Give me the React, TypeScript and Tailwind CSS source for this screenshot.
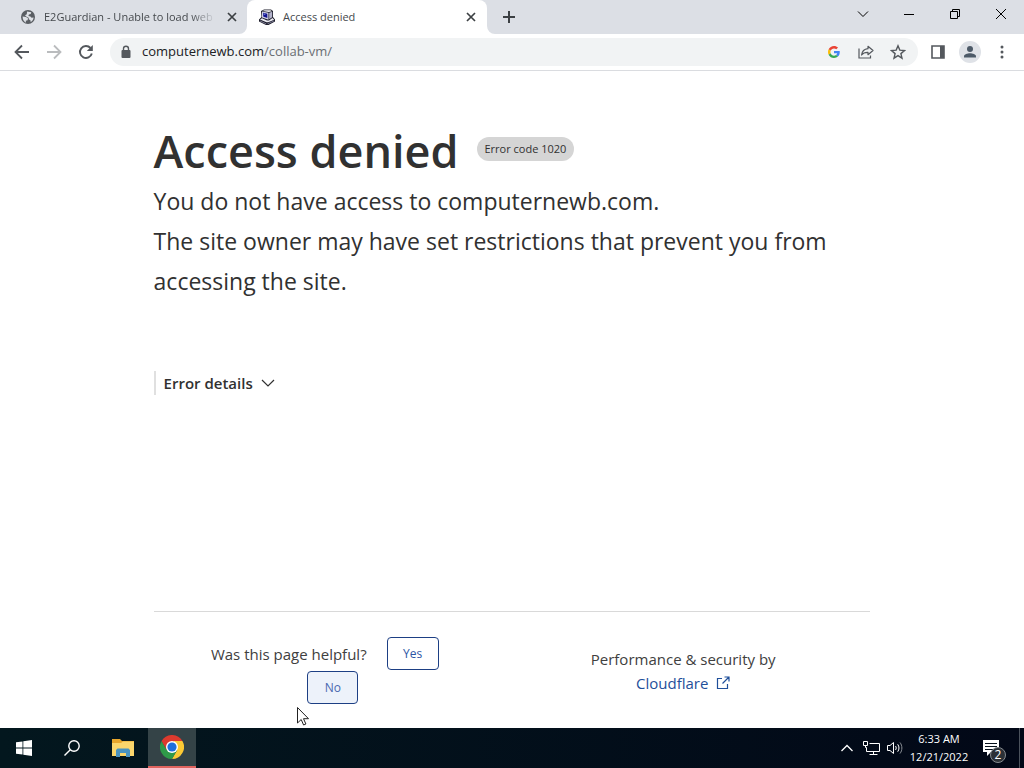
import React from 'react';

const UI_FONT = "font-['Segoe_UI','Open_Sans','Noto_Sans',sans-serif]";

function GlobeIcon() {
	return (
		<svg viewBox="0 0 16 16" className="w-4 h-4 shrink-0">
			<circle cx="8" cy="8" r="7" fill="#5a5e63" />
			<path
				d="M2.600 7.500 6 7.900l2 1.300-.4 2-1.800.5.200 2C4 13 2.600 10.600 2.600 7.500Z M7 2.600 11.300 3.300l-.6 1.700-1.800.5-.5 1.500 2 .4 1.200 1.400 2-.3c-.2 2-1.300 3.700-2.900 4.600l-.4-2-1.400-.6-.3-1.700-2.400-1.200L5 6.200l1.800-1Z"
				fill="#dee1e6"
			/>
		</svg>
	);
}

function ComputerIcon() {
	return (
		<svg viewBox="0 0 16 16" className="w-4 h-4 shrink-0">
			<path d="M2 2 5 .5h7l2 1.500v6l2 2.500v2L9.500 16H7L0 12.500v-2L2.500 8Z" fill="#1c1c2a" />
			<path d="m3 2.500 6.500 1.200v7L3 8.500Z" fill="#d0d0e4" />
			<path d="M4.200 3.800 8.300 4.700v4.200L4.200 7.600Z" fill="#10108c" />
			<path d="m4.800 4.500 1.500.3v1.200l-1.500-.4Z" fill="#7d8bf0" />
			<path d="M3.500 1.900 5.500 1.200h6L13 2.200 9.800 3Z" fill="#f3f3f7" />
			<path d="m10.200 3.700 3-1v5.500l-3 2Z" fill="#b4b4cc" />
			<path d="m1 10.500 2-1.300 5 2.300h2l3.500-2.500 1.700 1.700-6 2.600H7.500Z" fill="#ececf4" />
			<path d="m1 11.500 6.300 2.900v.8L1 12.300ZM15 11.500 8.500 14.400v.8l6.500-2.900Z" fill="#9494b0" />
		</svg>
	);
}

function GoogleIcon() {
	return (
		<svg viewBox="0 0 48 48" className="w-3 h-3">
			<path fill="#EA4335" d="M24 9.500c3.500 0 6.700 1.200 9.200 3.600l6.900-6.900C35.900 2.400 30.500 0 24 0 14.600 0 6.500 5.400 2.600 13.200l8 6.200C12.400 13.700 17.700 9.500 24 9.500z" />
			<path fill="#4285F4" d="M47 24.500c0-1.600-.2-3.100-.4-4.500H24v9h12.900c-.6 3-2.200 5.500-4.800 7.200l7.700 6C44.400 38 47 31.800 47 24.500z" />
			<path fill="#FBBC05" d="M10.500 28.600c-.5-1.500-.8-3-.8-4.600s.3-3.100.8-4.600l-8-6.200C.9 16.500 0 20.100 0 24s.9 7.500 2.600 10.800z" />
			<path fill="#34A853" d="M24 48c6.500 0 11.900-2.100 15.900-5.800l-7.700-6c-2.200 1.500-4.900 2.300-8.200 2.300-6.300 0-11.600-4.200-13.500-9.900l-8 6.200C6.500 42.600 14.600 48 24 48z" />
		</svg>
	);
}

function ChromeIcon() {
	return (
		<svg viewBox="0 0 24 24" className="w-6 h-6">
			<path d="M1.600 6A12 12 0 0 1 22.400 6L12 12Z" fill="#dc3a2e" />
			<path d="M22.400 6A12 12 0 0 1 12 24l5.200-9L12 6Z" fill="#fcc934" />
			<path d="M1.600 6A12 12 0 0 0 12 24l5.200-9L12 12 6.800 15Z" fill="#2f9a49" />
			<path d="M1.600 6 6.800 15 12 12l2-6Z" fill="#dc3a2e" />
			<circle cx="12" cy="12" r="6" fill="#fff" />
			<circle cx="12" cy="12" r="4.600" fill="#1f6fdc" />
		</svg>
	);
}

function CloseIcon() {
	return (
		<svg viewBox="0 0 10 10" className="w-2.5 h-2.5" stroke="#3c4043" strokeWidth="1.7">
			<path d="m1 1 8 8M9 1 1 9" />
		</svg>
	);
}

function TabStrip() {
	return (
		<header className="flex h-[34px] bg-[#dcdfe5] text-[11px] text-[#45494d]">
			<div className="flex w-[247px] items-center pl-5 pr-[7px]">
				<GlobeIcon />
				<span className="ml-2 flex-1 whitespace-nowrap [mask-image:linear-gradient(to_right,black_85%,transparent)]">
					E2Guardian - Unable to load web
				</span>
				<button aria-label="Close E2Guardian tab" className="ml-2 flex h-4 w-4 items-center justify-center">
					<CloseIcon />
				</button>
			</div>
			<div className="relative flex w-60 items-center rounded-t-lg bg-white pl-3 pr-2">
				<svg viewBox="0 0 8 8" className="absolute -left-2 bottom-0 h-2 w-2">
					<path d="M8 0a8 8 0 0 1-8 8h8Z" fill="#fff" />
				</svg>
				<svg viewBox="0 0 8 8" className="absolute -right-2 bottom-0 h-2 w-2">
					<path d="M0 0a8 8 0 0 0 8 8H0Z" fill="#fff" />
				</svg>
				<ComputerIcon />
				<span className="ml-2 flex-1 whitespace-nowrap">Access denied</span>
				<button aria-label="Close Access denied tab" className="flex h-4 w-4 items-center justify-center">
					<CloseIcon />
				</button>
			</div>
			<button aria-label="New tab" className="ml-2 flex w-7 items-center justify-center">
				<svg viewBox="0 0 12 12" className="h-3 w-3" stroke="#3c4043" strokeWidth="2">
					<path d="M6 0v12M0 6h12" />
				</svg>
			</button>
			<div className="ml-auto flex h-7 text-black">
				<button aria-label="Search tabs" className="flex w-[46px] items-center justify-center">
					<svg viewBox="0 0 12 12" className="h-3 w-3" fill="none" stroke="currentColor">
						<path d="m1 3.500 5 5 5-5" />
					</svg>
				</button>
				<button aria-label="Minimize" className="flex w-[46px] items-center justify-center">
					<svg viewBox="0 0 10 10" className="h-2.5 w-2.5" stroke="currentColor">
						<path d="M0 5.500h10" />
					</svg>
				</button>
				<button aria-label="Restore" className="flex w-[46px] items-center justify-center">
					<svg viewBox="0 0 10 10" className="h-2.5 w-2.5" fill="none" stroke="currentColor">
						<path d="M.5 2.500h7v7h-7ZM2.500 2.500v-2h7v7h-2" />
					</svg>
				</button>
				<button aria-label="Close window" className="flex w-[46px] items-center justify-center">
					<svg viewBox="0 0 10 10" className="h-2.5 w-2.5" stroke="currentColor">
						<path d="m0 0 10 10M10 0 0 10" />
					</svg>
				</button>
			</div>
		</header>
	);
}

function Toolbar() {
	return (
		<nav className="flex h-[37px] items-center border-b border-[#dadce0] bg-white px-1.5 text-[#54585d]">
			<button aria-label="Back" className="flex w-8 justify-center">
				<svg viewBox="0 0 16 16" className="h-4 w-4" fill="none" stroke="currentColor" strokeWidth="1.800">
					<path d="M15 8H2M8 1.500 1.500 8 8 14.500" />
				</svg>
			</button>
			<button aria-label="Forward" className="flex w-8 justify-center text-[#babcbe]">
				<svg viewBox="0 0 16 16" className="h-4 w-4" fill="none" stroke="currentColor" strokeWidth="1.800">
					<path d="M1 8h13M8 1.500 14.500 8 8 14.500" />
				</svg>
			</button>
			<button aria-label="Reload" className="flex w-8 justify-center">
				<svg viewBox="0 0 16 16" className="h-4 w-4" fill="none" stroke="currentColor" strokeWidth="1.900">
					<path d="M13.800 9.500A6 6 0 1 1 12.500 4" />
					<path d="M14.800 1v6h-6Z" fill="currentColor" stroke="none" />
				</svg>
			</button>
			<div className="ml-2 mr-1 flex h-7 flex-1 items-center rounded-full bg-[#f1f3f4] pl-2.5 pr-1">
				<svg viewBox="0 0 12 14" className="h-3.5 w-3">
					<path d="M3.500 6V3.700a2.500 2.500 0 0 1 5 0V6" fill="none" stroke="#54585d" strokeWidth="1.400" />
					<rect x="1.500" y="5" width="9" height="8" rx="1" fill="#54585d" />
				</svg>
				<a href="https://computernewb.com/collab-vm/" className="ml-2.5 flex-1 text-[13px] text-[#6a6e73]">
					<span className="text-[#202124]">computernewb.com</span>/collab-vm/
				</a>
				<button aria-label="Search with Google" className="flex w-8 justify-center">
					<GoogleIcon />
				</button>
				<button aria-label="Share this page" className="flex w-8 justify-center">
					<svg viewBox="0 0 16 16" className="h-4 w-4" fill="none" stroke="currentColor" strokeWidth="1.200">
						<path d="M1 4.500V14h11.500v-2.500" />
						<path d="M10 2.300 15 6.500l-5 4.200V8.300C7 8.200 5 9 3.600 11 4 7.500 6.200 5.200 10 4.700Z" strokeLinejoin="round" />
					</svg>
				</button>
				<button aria-label="Bookmark this tab" className="flex w-8 justify-center">
					<svg viewBox="0 0 16 16" className="h-4 w-4" fill="none" stroke="currentColor" strokeWidth="1.400">
						<path d="m8 1.800 1.800 4.300 4.700.4-3.600 3.100 1.100 4.600L8 11.700l-4 2.500 1.100-4.600L1.500 6.500l4.700-.4Z" />
					</svg>
				</button>
			</div>
			<button aria-label="Side panel" className="flex w-8 justify-center">
				<svg viewBox="0 0 14 14" className="h-3.5 w-3.5">
					<path d="M1 1h12v12H1Z" fill="none" stroke="currentColor" strokeWidth="1.600" />
					<path d="M9 1h4v12H9Z" fill="currentColor" />
				</svg>
			</button>
			<button aria-label="Profile" className="flex w-8 justify-center">
				<svg viewBox="0 0 22 22" className="h-[22px] w-[22px]">
					<circle cx="11" cy="11" r="11" fill="#dfe2e7" />
					<circle cx="11" cy="8" r="3" fill="#4d5a68" />
					<path d="M5 16.500v-1.300c0-2 3.500-3 6-3s6 1 6 3v1.300Z" fill="#4d5a68" />
				</svg>
			</button>
			<button aria-label="Menu" className="flex w-8 justify-center">
				<svg viewBox="0 0 4 14" className="h-3.5 w-1" fill="currentColor">
					<circle cx="2" cy="2" r="1.500" />
					<circle cx="2" cy="7" r="1.500" />
					<circle cx="2" cy="12" r="1.500" />
				</svg>
			</button>
		</nav>
	);
}

function ErrorPage() {
	return (
		<main className="mx-auto flex w-7/10 flex-1 flex-col text-[15px]/6 text-[#313131]">
			<div className="mt-[50px] flex items-start">
				<h1 className="whitespace-nowrap text-[45px]/[60px] font-semibold">Access denied</h1>
				<span className="ml-[18px] mt-4 whitespace-nowrap rounded-full bg-[#d5d5d5] px-2 text-[11px]/6">
					Error code 1020
				</span>
			</div>
			<h2 className="text-[23px]/10">You do not have access to computernewb.com.</h2>
			<p className="text-[23px]/10">
				The site owner may have set restrictions that prevent you from accessing the site.
			</p>
			<button className="mt-[70px] flex items-center self-start border-l-2 border-[#e0e0e0] pl-2 font-semibold">
				Error details
				<svg viewBox="0 0 14 8" className="ml-2 h-2 w-3.5" fill="none" stroke="#313131" strokeWidth="1.200">
					<path d="m1 1 6 6 6-6" />
				</svg>
			</button>
			<footer className="mt-auto flex border-t border-[#d9d9d9] pb-6 pt-[25px] text-center text-[#404040]">
				<div className="flex w-1/2 flex-wrap items-center justify-center gap-y-px pl-8 pr-12">
					<span>Was this page helpful?</span>
					<button className="ml-5 h-[33px] w-[52px] rounded-sm border border-[#1d3f84] text-xs text-[#2c55a5]">Yes</button>
					<button className="ml-4 h-[33px] w-[51px] rounded-sm border border-[#1d3f84] bg-[#edf2fa] text-xs text-[#4a68b0]">No</button>
				</div>
				<div className="w-1/2 pr-4 pt-2.5">
					<p>Performance &amp; security by</p>
					<a href="https://www.cloudflare.com" className="inline-flex items-center text-[#1f4f9a]">
						Cloudflare
						<svg viewBox="0 0 14 14" className="ml-2 h-3.5 w-3.5" fill="none" stroke="currentColor" strokeWidth="1.200">
							<path d="M6 2.500H1.500v10h10V8M8.500 1H13v4.500M13 1 6.500 7.500" />
						</svg>
					</a>
				</div>
			</footer>
		</main>
	);
}

function Taskbar() {
	return (
		<footer className="flex h-10 items-stretch bg-gradient-to-r from-[#03171e] to-[#020817] text-white">
			<button aria-label="Start" className="flex w-12 items-center justify-center">
				<svg viewBox="0 0 16 16" className="h-4 w-4" fill="#fff">
					<path d="m0 2.300 6.500-.9v6.200H0ZM7.300 1.300 16 0v7.600H7.300ZM0 8.400h6.500v6.200L0 13.700ZM7.300 8.400H16V16l-8.700-1.300Z" />
				</svg>
			</button>
			<button aria-label="Search" className="flex w-12 items-center justify-center">
				<svg viewBox="0 0 16 16" className="h-4 w-4" fill="none" stroke="#fff" strokeWidth="1.400">
					<circle cx="10" cy="6" r="5.200" />
					<path d="M6.300 9.700.5 15.500" />
				</svg>
			</button>
			<button aria-label="File Explorer" className="ml-[3px] flex w-12 items-center justify-center">
				<svg viewBox="0 0 22 18" className="h-[18px] w-[22px]">
					<path d="M0 0h8l2 2h12v15H0Z" fill="#e8a62c" />
					<path d="M0 4 9 4l2-1.500h11V17H0Z" fill="#fbd66c" />
					<path d="M4 18v-7l1.500-1.500h11L18 11v7h-4v-4H8v4Z" fill="#4a93c0" />
				</svg>
			</button>
			<button aria-label="Google Chrome" className="ml-px flex w-12 items-center justify-center border-b-2 border-[#e0645f] bg-[#344347]">
				<ChromeIcon />
			</button>
			<div className="ml-auto flex items-center">
				<button aria-label="Show hidden icons" className="flex w-6 justify-center">
					<svg viewBox="0 0 12 8" className="h-2 w-3" fill="none" stroke="#fff" strokeWidth="1.300">
						<path d="m.5 7 5.500-5.500L11.500 7" />
					</svg>
				</button>
				<button aria-label="Network" className="flex w-6 justify-center">
					<svg viewBox="0 0 17 14" className="h-3.5 w-[17px]" fill="none" stroke="#fff">
						<path d="M6.500 2.500h10v8h-13V6.500M.5.500h4v4h-4ZM2.500 4.500v2h1M10.500 10.500v3M6.500 13.500h8" />
					</svg>
				</button>
				<button aria-label="Volume" className="flex w-6 justify-center">
					<svg viewBox="0 0 16 14" className="h-3.5 w-4" fill="none" stroke="#fff">
						<path d="M.5 4.500h2.500l3.500-3v11L3 9.500H.5ZM8.500 5c.9 1.200.9 2.800 0 4M10.700 3.300c1.700 2.200 1.700 5.200 0 7.400" />
						<path d="M13 1.500c2.500 3.200 2.500 7.800 0 11" stroke="#8b9096" />
					</svg>
				</button>
				<time className="w-16 text-center text-[11px]/[18px]">
					<span className="block">6:33 AM</span>
					<span className="block">12/21/2022</span>
				</time>
				<button aria-label="2 new notifications" className="flex w-12 justify-center pr-2">
					<span className="relative">
						<svg viewBox="0 0 18 18" className="h-[18px] w-[18px]">
							<path d="M1 1h16v12H9l-4 4v-4H1Z" fill="#fff" />
							<path d="M3 4.500h12M3 7.500h12M3 10.500h8" stroke="#07111c" />
						</svg>
						<span className="absolute left-2 top-2 flex h-4 w-4 items-center justify-center rounded-full border border-[#868b90] bg-[#2b3036] text-xs/3">
							2
						</span>
					</span>
				</button>
				<span className="h-10 w-[5px] border-l border-[#4b525c]" />
			</div>
		</footer>
	);
}

export default function App() {
	return (
		<div className={`relative flex min-h-screen flex-col bg-white ${UI_FONT}`}>
			<TabStrip />
			<Toolbar />
			<ErrorPage />
			<Taskbar />
			{/* mouse pointer */}
			<svg viewBox="0 0 14 20" className="absolute left-[296px] top-[706px] h-5 w-3.5">
				<path d="M1.500 1.500v15.500l3.700-3.500 2.400 5.500 2.300-1-2.400-5.300h5Z" fill="#fff" stroke="#222" />
			</svg>
		</div>
	);
}
